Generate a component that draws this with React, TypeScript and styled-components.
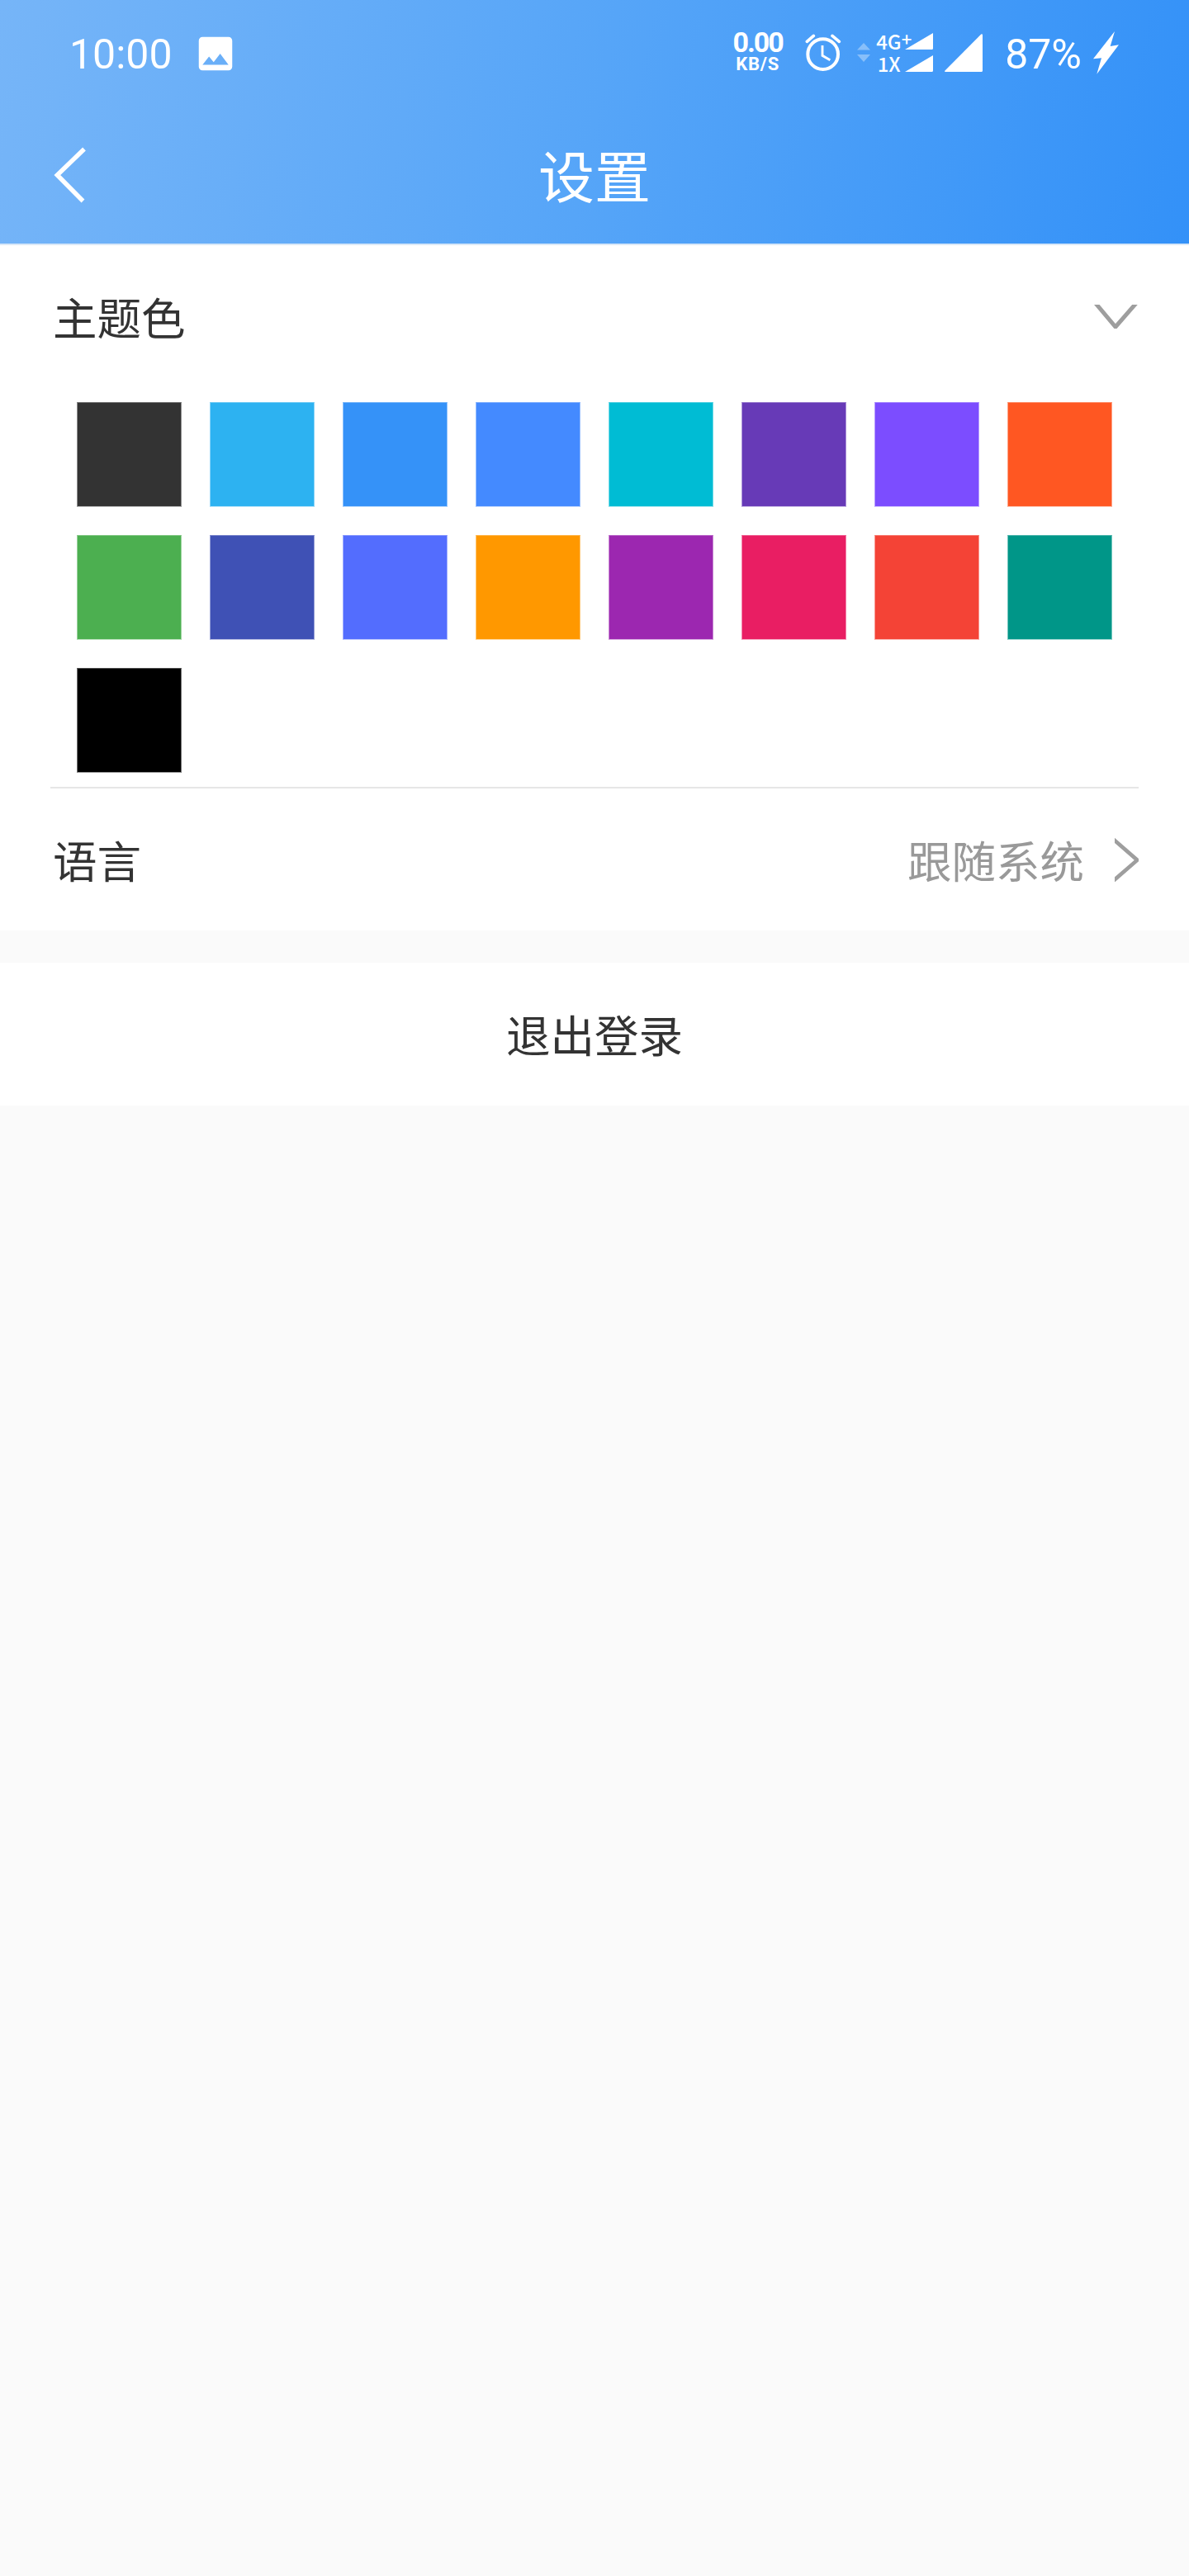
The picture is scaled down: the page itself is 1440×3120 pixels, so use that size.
import React from "react";
import styled, { createGlobalStyle } from "styled-components";

const GlobalStyle = createGlobalStyle`
  * { box-sizing: border-box; }
  body { margin: 0; background: #fafafa; }
`;

const Screen = styled.div`
  width: 1440px;
  min-height: 3120px;
  background: #fafafa;
  color: #333;
  font-family: "Noto Sans CJK SC", "Noto Sans", sans-serif;
`;

const Header = styled.header`
  height: 297px;
  border-bottom: 2px solid #d9e8f7;
  background: linear-gradient(101.6deg, #76b5f8 0%, #56a5f8 50%, #3391f8 100%);
  background-clip: padding-box;
  color: #fff;
`;

const StatusBar = styled.div`
  display: flex;
  justify-content: space-between;
  height: 127px;
  padding: 37px 85px 32px 84px;
  font-family: Roboto, sans-serif;
`;

const StatusGroup = styled.div`
  display: flex;
  align-items: flex-start;
`;

const StatusText = styled.span<{ $left?: number }>`
  margin-left: ${(p) => p.$left ?? 0}px;
  font-size: 50px;
  line-height: 58px;
  white-space: nowrap;
`;

const Glyph = styled.svg<{ $left?: number; $top?: number }>`
  display: block;
  flex: none;
  margin-left: ${(p) => p.$left ?? 0}px;
  margin-top: ${(p) => p.$top ?? 0}px;
`;

const NetSpeed = styled.div`
  display: flex;
  flex-direction: column;
  align-items: center;
  gap: 3px;
  width: 63px;
  padding-top: 1px;
  font-weight: 700;
  white-space: nowrap;
`;

const SpeedValue = styled.span`
  font-size: 34px;
  line-height: 26px;
  letter-spacing: -2px;
`;

const SpeedUnit = styled.span`
  font-size: 22px;
  line-height: 22px;
  letter-spacing: 0.8px;
`;

const NetworkLabels = styled.div`
  display: flex;
  flex-direction: column;
  width: 41px;
  margin: -1px 0 0 7px;
  font: 500 24px/27px "Noto Sans CJK SC", sans-serif;
  white-space: nowrap;
`;

const NetworkLabel = styled.span<{ $indent?: number }>`
  display: block;
  height: 27px;
  padding-left: ${(p) => p.$indent ?? 0}px;
`;

const Plus = styled.span`
  font-size: 22px;
  line-height: 1px;
  vertical-align: 4px;
`;

const TitleBar = styled.div`
  display: grid;
  grid-template-columns: 110px 1fr 110px;
  align-items: center;
  height: 168px;
  padding: 0 61px;
`;

const Title = styled.h1`
  margin: 0;
  text-align: center;
  font-size: 68px;
  font-weight: 400;
  line-height: 98px;
`;

const BackButton = styled.button`
  display: flex;
  padding: 0;
  border: 0;
  background: none;
  color: inherit;
`;

const Section = styled.section`
  background: #fff;
`;

const Row = styled.div`
  display: flex;
  align-items: center;
  height: 172px;
  padding: 0 61px 0 64px;
  font-size: 53.5px;
  line-height: 78px;
`;

const Label = styled.span`
  flex: 1;
`;

const Value = styled.span`
  margin-right: 37px;
  color: #999;
`;

const Palette = styled.div`
  display: grid;
  grid-template-columns: repeat(8, 127px);
  gap: 34px;
  padding: 18px 93px 17px;
`;

const Swatch = styled.div<{ $color: string }>`
  height: 127px;
  border: 1px solid rgba(255, 255, 255, 0.45);
  border-top-color: rgba(255, 255, 255, 0.3);
  border-bottom-color: rgba(255, 255, 255, 0.6);
  background: ${(p) => p.$color};
`;

const Divider = styled.hr`
  height: 2px;
  margin: 0 61px;
  border: 0;
  background: #e6e6e6;
`;

const LogoutButton = styled.button`
  display: block;
  width: 100%;
  height: 173px;
  margin-top: 39px;
  padding: 0 0 2px;
  border: 0;
  background: #fff;
  color: #333;
  font: 400 53.5px/78px "Noto Sans CJK SC", sans-serif;
  text-align: center;
`;

const colors = [
  "#333333", "#2db2f1", "#3592f8", "#448aff", "#00bcd4", "#673ab7", "#7c4dff", "#ff5722",
  "#4caf50", "#3f51b5", "#536dfe", "#ff9800", "#9c27b0", "#e91e63", "#f44336", "#009688",
  "#000000",
];

const PictureIcon = () => (
  <Glyph $left={25.5} $top={0.5} width="54" height="54" viewBox="0 0 24 24" fill="#fff">
    <path d="M21 19V5c0-1.100-.9-2-2-2H5c-1.100 0-2 .9-2 2v14c0 1.100.9 2 2 2h14c1.100 0 2-.9 2-2zM8.500 13.500l2.500 3.010L14.500 12l4.500 6H5l3.500-4.500z" />
  </Glyph>
);

const AlarmIcon = () => (
  <Glyph $left={24} $top={1} width="48" height="50" viewBox="340 85 144 150" fill="none" stroke="#fff">
    <circle cx="411" cy="168" r="55" strokeWidth="12" />
    <path d="M353 122L377 101M445 101L470 122" strokeWidth="11" strokeLinecap="round" />
    <path d="M409 136V173L437 189" strokeWidth="8.500" />
  </Glyph>
);

const TrafficIcon = () => (
  <Glyph $left={17} $top={15} width="16" height="23" fill="#fff" opacity="0.35">
    <path d="M0 8.500L8 0L16 8.500ZM0 14H16L8 23Z" />
  </Glyph>
);

const DualSignalIcon = () => (
  <Glyph $left={-6} $top={3} width="34" height="47" fill="#fff">
    <path d="M0 20L34 0V18.500Q34 20 32.500 20ZM0 47L34 27V45.500Q34 47 32.500 47Z" />
  </Glyph>
);

const SignalIcon = () => (
  <Glyph $left={14} $top={4} width="46" height="46" fill="#fff">
    <path d="M0.500 44.500L44.200 0.500Q46 -0.200 46 1.500V44.500Q46 46 44.500 46H1Q-0.300 46 0.500 44.500Z" />
  </Glyph>
);

const BoltIcon = () => (
  <Glyph $left={14} $top={1} width="31" height="52" viewBox="612 84 93 156" fill="#fff">
    <path d="M690 84L612 184L642 181L625 239L705 133L674 138Z" />
  </Glyph>
);

const BackIcon = () => (
  <Glyph $left={4} $top={2} width="42" height="68" fill="none" stroke="#fff" strokeWidth="5.400">
    <path d="M37 2.500L4.300 34L35.500 65.500" />
  </Glyph>
);

const ChevronDown = () => (
  <Glyph $top={1} width="54" height="29" viewBox="435 117 162 87" fill="none" stroke="#9e9e9e" strokeWidth="15">
    <path d="M436.500 107L513 198L592 107" />
  </Glyph>
);

const ChevronRight = () => (
  <Glyph $top={1} width="29" height="53" viewBox="870 257 87 159" fill="none" stroke="#9e9e9e" strokeWidth="14">
    <path d="M860 257L952 337L860 417" />
  </Glyph>
);

export default function App() {
  return (
    <Screen>
      <GlobalStyle />
      <Header>
        <StatusBar>
          <StatusGroup>
            <StatusText>10:00</StatusText>
            <PictureIcon />
          </StatusGroup>
          <StatusGroup>
            <NetSpeed>
              <SpeedValue>0.00</SpeedValue>
              <SpeedUnit>KB/S</SpeedUnit>
            </NetSpeed>
            <AlarmIcon />
            <TrafficIcon />
            <NetworkLabels>
              <NetworkLabel>4G<Plus>+</Plus></NetworkLabel>
              <NetworkLabel $indent={1.5}>1X</NetworkLabel>
            </NetworkLabels>
            <DualSignalIcon />
            <SignalIcon />
            <StatusText $left={27}>87%</StatusText>
            <BoltIcon />
          </StatusGroup>
        </StatusBar>
        <TitleBar>
          <BackButton aria-label="返回"><BackIcon /></BackButton>
          <Title>设置</Title>
        </TitleBar>
      </Header>
      <Section>
        <Row>
          <Label>主题色</Label>
          <ChevronDown />
        </Row>
        <Palette>
          {colors.map((c) => <Swatch key={c} $color={c} />)}
        </Palette>
        <Divider />
        <Row>
          <Label>语言</Label>
          <Value>跟随系统</Value>
          <ChevronRight />
        </Row>
      </Section>
      <LogoutButton>退出登录</LogoutButton>
    </Screen>
  );
}
